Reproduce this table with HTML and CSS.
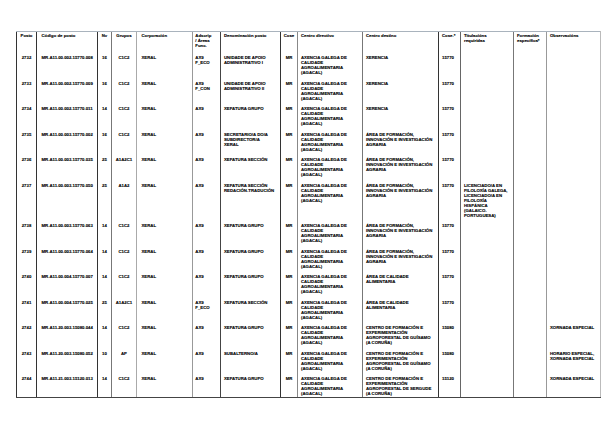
FILE: index.html
```html
<!DOCTYPE html>
<html lang="gl">
<head>
<meta charset="utf-8">
<title>RPT</title>
<link rel="stylesheet" href="styles.css">
</head>
<body>
<table class="rpt">
<colgroup>
<col class="w-posto"><col class="w-codigo"><col class="w-nv"><col class="w-grupos"><col class="w-corp"><col class="w-adscr"><col class="w-denom"><col class="w-cose"><col class="w-cdir"><col class="w-cdest"><col class="w-ce"><col class="w-tit"><col class="w-form"><col class="w-obs">
</colgroup>
<thead>
<tr>
<th class="c">Posto</th><th class="pl">Código de posto</th><th class="c">Nv</th><th class="c">Grupos</th><th class="pl">Corporación</th><th class="ps">Adscrip<br>/ Áreas<br>Func.</th><th>Denominación posto</th><th class="c">Cose</th><th>Centro directivo</th><th>Centro destino</th><th>Cose.*</th><th>Titulacións<br>requiridas</th><th>Formación<br>específica*</th><th>Observacións</th>
</tr>
</thead>
<tbody>
<tr>
<td class="c">2732</td><td class="pl">MR.A11.00.002.15770.008</td><td class="c">16</td><td class="c">C1C2</td><td class="pl">XERAL</td><td class="ps">AX9<br>F_ECO</td><td>UNIDADE DE APOIO<br>ADMINISTRATIVO I</td><td class="c">MR</td><td>AXENCIA GALEGA DE<br>CALIDADE<br>AGROALIMENTARIA<br>(AGACAL)</td><td>XERENCIA</td><td>15770</td><td></td><td></td><td></td>
</tr>
<tr>
<td class="c">2733</td><td class="pl">MR.A11.00.002.15770.009</td><td class="c">16</td><td class="c">C1C2</td><td class="pl">XERAL</td><td class="ps">AX9<br>F_CON</td><td>UNIDADE DE APOIO<br>ADMINISTRATIVO II</td><td class="c">MR</td><td>AXENCIA GALEGA DE<br>CALIDADE<br>AGROALIMENTARIA<br>(AGACAL)</td><td>XERENCIA</td><td>15770</td><td></td><td></td><td></td>
</tr>
<tr>
<td class="c">2734</td><td class="pl">MR.A11.00.002.15770.011</td><td class="c">14</td><td class="c">C1C2</td><td class="pl">XERAL</td><td class="ps">AX9</td><td>XEFATURA GRUPO</td><td class="c">MR</td><td>AXENCIA GALEGA DE<br>CALIDADE<br>AGROALIMENTARIA<br>(AGACAL)</td><td>XERENCIA</td><td>15770</td><td></td><td></td><td></td>
</tr>
<tr>
<td class="c">2735</td><td class="pl">MR.A11.00.003.15770.002</td><td class="c">16</td><td class="c">C1C2</td><td class="pl">XERAL</td><td class="ps">AX9</td><td>SECRETARIO/A DO/A<br>SUBDIRECTOR/A<br>XERAL</td><td class="c">MR</td><td>AXENCIA GALEGA DE<br>CALIDADE<br>AGROALIMENTARIA<br>(AGACAL)</td><td>ÁREA DE FORMACIÓN,<br>INNOVACIÓN E INVESTIGACIÓN<br>AGRARIA</td><td>15770</td><td></td><td></td><td></td>
</tr>
<tr>
<td class="c">2736</td><td class="pl">MR.A11.00.003.15770.035</td><td class="c">25</td><td class="c">A1A2C1</td><td class="pl">XERAL</td><td class="ps">AX9</td><td>XEFATURA SECCIÓN</td><td class="c">MR</td><td>AXENCIA GALEGA DE<br>CALIDADE<br>AGROALIMENTARIA<br>(AGACAL)</td><td>ÁREA DE FORMACIÓN,<br>INNOVACIÓN E INVESTIGACIÓN<br>AGRARIA</td><td>15770</td><td></td><td></td><td></td>
</tr>
<tr>
<td class="c">2737</td><td class="pl">MR.A11.00.003.15770.050</td><td class="c">25</td><td class="c">A1A2</td><td class="pl">XERAL</td><td class="ps">AX9</td><td>XEFATURA SECCIÓN<br>REDACIÓN-TRADUCIÓN</td><td class="c">MR</td><td>AXENCIA GALEGA DE<br>CALIDADE<br>AGROALIMENTARIA<br>(AGACAL)</td><td>ÁREA DE FORMACIÓN,<br>INNOVACIÓN E INVESTIGACIÓN<br>AGRARIA</td><td>15770</td><td>LICENCIADO/A EN<br>FILOLOXÍA GALEGA,<br>LICENCIADO/A EN<br>FILOLOXÍA<br>HISPÁNICA<br>(GALAICO-<br>PORTUGUESA)</td><td></td><td></td>
</tr>
<tr>
<td class="c">2738</td><td class="pl">MR.A11.00.003.15770.063</td><td class="c">14</td><td class="c">C1C2</td><td class="pl">XERAL</td><td class="ps">AX9</td><td>XEFATURA GRUPO</td><td class="c">MR</td><td>AXENCIA GALEGA DE<br>CALIDADE<br>AGROALIMENTARIA<br>(AGACAL)</td><td>ÁREA DE FORMACIÓN,<br>INNOVACIÓN E INVESTIGACIÓN<br>AGRARIA</td><td>15770</td><td></td><td></td><td></td>
</tr>
<tr>
<td class="c">2739</td><td class="pl">MR.A11.00.003.15770.064</td><td class="c">14</td><td class="c">C1C2</td><td class="pl">XERAL</td><td class="ps">AX9</td><td>XEFATURA GRUPO</td><td class="c">MR</td><td>AXENCIA GALEGA DE<br>CALIDADE<br>AGROALIMENTARIA<br>(AGACAL)</td><td>ÁREA DE FORMACIÓN,<br>INNOVACIÓN E INVESTIGACIÓN<br>AGRARIA</td><td>15770</td><td></td><td></td><td></td>
</tr>
<tr>
<td class="c">2740</td><td class="pl">MR.A11.00.004.15770.007</td><td class="c">14</td><td class="c">C1C2</td><td class="pl">XERAL</td><td class="ps">AX9</td><td>XEFATURA GRUPO</td><td class="c">MR</td><td>AXENCIA GALEGA DE<br>CALIDADE<br>AGROALIMENTARIA<br>(AGACAL)</td><td>ÁREA DE CALIDADE<br>ALIMENTARIA</td><td>15770</td><td></td><td></td><td></td>
</tr>
<tr>
<td class="c">2741</td><td class="pl">MR.A11.00.004.15770.025</td><td class="c">25</td><td class="c">A1A2C1</td><td class="pl">XERAL</td><td class="ps">AX9<br>F_ECO</td><td>XEFATURA SECCIÓN</td><td class="c">MR</td><td>AXENCIA GALEGA DE<br>CALIDADE<br>AGROALIMENTARIA<br>(AGACAL)</td><td>ÁREA DE CALIDADE<br>ALIMENTARIA</td><td>15770</td><td></td><td></td><td></td>
</tr>
<tr>
<td class="c">2742</td><td class="pl">MR.A11.20.003.15080.044</td><td class="c">14</td><td class="c">C1C2</td><td class="pl">XERAL</td><td class="ps">AX9</td><td>XEFATURA GRUPO</td><td class="c">MR</td><td>AXENCIA GALEGA DE<br>CALIDADE<br>AGROALIMENTARIA<br>(AGACAL)</td><td>CENTRO DE FORMACIÓN E<br>EXPERIMENTACIÓN<br>AGROFORESTAL DE GUÍSAMO<br>(A CORUÑA)</td><td>15080</td><td></td><td></td><td>XORNADA ESPECIAL</td>
</tr>
<tr>
<td class="c">2743</td><td class="pl">MR.A11.20.003.15080.052</td><td class="c">10</td><td class="c">AP</td><td class="pl">XERAL</td><td class="ps">AX9</td><td>SUBALTERNO/A</td><td class="c">MR</td><td>AXENCIA GALEGA DE<br>CALIDADE<br>AGROALIMENTARIA<br>(AGACAL)</td><td>CENTRO DE FORMACIÓN E<br>EXPERIMENTACIÓN<br>AGROFORESTAL DE GUÍSAMO<br>(A CORUÑA)</td><td>15080</td><td></td><td></td><td>HORARIO ESPECIAL,<br>XORNADA ESPECIAL</td>
</tr>
<tr>
<td class="c">2744</td><td class="pl">MR.A11.21.003.15120.013</td><td class="c">14</td><td class="c">C1C2</td><td class="pl">XERAL</td><td class="ps">AX9</td><td>XEFATURA GRUPO</td><td class="c">MR</td><td>AXENCIA GALEGA DE<br>CALIDADE<br>AGROALIMENTARIA<br>(AGACAL)</td><td>CENTRO DE FORMACIÓN E<br>EXPERIMENTACIÓN<br>AGROFORESTAL DE SERGUDE<br>(A CORUÑA)</td><td>15120</td><td></td><td></td><td>XORNADA ESPECIAL</td>
</tr>
</tbody>
</table>
</body>
</html>
```
FILE: styles.css
```css
html, body {
  background: #fff;
}
body {
  margin: 0;
  padding: 31px 0 0 16px;
}
.rpt {
  border-collapse: collapse;
  table-layout: fixed;
  width: 584px;
  font-family: "Liberation Sans", Arial, sans-serif;
  font-weight: bold;
  font-size: 4.3px;
  line-height: 5px;
  color: #000;
  -webkit-text-stroke: 0.12px #000;
}
.w-posto { width: 20px; }
.w-codigo { width: 61px; }
.w-nv { width: 14px; }
.w-grupos { width: 25px; }
.w-corp { width: 56px; }
.w-adscr { width: 28px; }
.w-denom { width: 60px; }
.w-cose { width: 17px; }
.w-cdir { width: 65px; }
.w-cdest { width: 76px; }
.w-ce { width: 22px; }
.w-tit { width: 53px; }
.w-form { width: 33px; }
.w-obs { width: 54px; }

.rpt th,
.rpt td {
  text-align: left;
  vertical-align: top;
  white-space: nowrap;
  padding-left: 3px;
  padding-right: 2px;
  border-left: 1px solid #888;
}
.rpt th {
  font-weight: bold;
  padding-top: 1px;
  padding-bottom: 2.5px;
  border-top: 1px solid #a9b3bd;
}
.rpt td {
  padding-top: 4.5px;
  padding-bottom: 1px;
}
.rpt tbody tr:last-child td {
  border-bottom: 1px solid #444;
}
.rpt .c { text-align: center; padding-left: 1px; padding-right: 1px; }
.rpt .pl { padding-left: 4.5px; }
.rpt .ps { padding-left: 2.3px; }

.rpt th:nth-child(1), .rpt td:nth-child(1) { border-left-color: #333; }
.rpt th:nth-child(2), .rpt td:nth-child(2) { border-left-color: #333; }
.rpt th:nth-child(3), .rpt td:nth-child(3) { border-left-color: #333; }
.rpt th:nth-child(4), .rpt td:nth-child(4) { border-left-color: #777; }
.rpt th:nth-child(5), .rpt td:nth-child(5) { border-left-color: #aaa; }
.rpt th:nth-child(6), .rpt td:nth-child(6) { border-left-color: #999; }
.rpt th:nth-child(7), .rpt td:nth-child(7) { border-left-color: #444; }
.rpt th:nth-child(8), .rpt td:nth-child(8) { border-left-color: #333; }
.rpt th:nth-child(9), .rpt td:nth-child(9) { border-left-color: #888; }
.rpt th:nth-child(10), .rpt td:nth-child(10) { border-left-color: #777; }
.rpt th:nth-child(11), .rpt td:nth-child(11) { border-left-color: #333; }
.rpt th:nth-child(12), .rpt td:nth-child(12) { border-left-color: #666; }
.rpt th:nth-child(13), .rpt td:nth-child(13) { border-left-color: #777; }
.rpt th:nth-child(14), .rpt td:nth-child(14) { border-left-color: #999; border-right: 1px solid #bbb; }
```
